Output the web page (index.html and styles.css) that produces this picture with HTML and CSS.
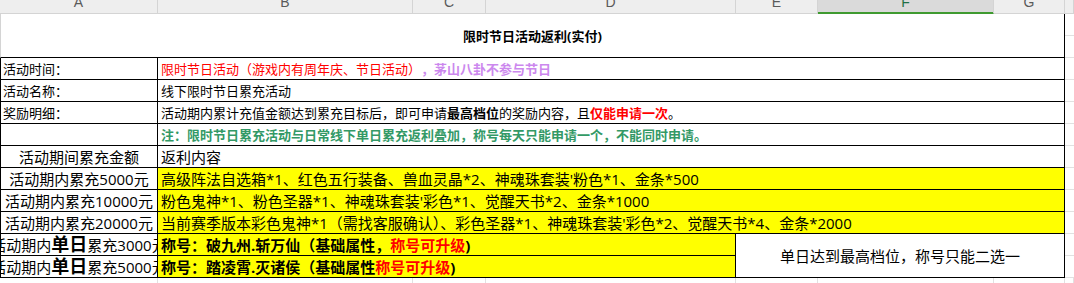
FILE: index.html
```html
<!DOCTYPE html>
<html lang="zh-CN">
<head>
<meta charset="utf-8">
<title>限时节日活动返利(实付)</title>
<link rel="stylesheet" href="styles.css">
</head>
<body>
<div class="colhead">
  <div class="ch">A</div>
  <div class="ch">B</div>
  <div class="ch">C</div>
  <div class="ch">D</div>
  <div class="ch">E</div>
  <div class="ch ch-sel">F</div>
  <div class="ch">G</div>
  <div class="ch"></div>
</div>
<div class="sheet">
  <div class="tbl">
    <div class="c title">限时节日活动返利(实付)</div>

    <div class="c a">活动时间：</div>
    <div class="c b wide"><span class="red">限时节日活动（游戏内有周年庆、节日活动）</span><b class="purple">，茅山八卦不参与节日</b></div>

    <div class="c a">活动名称：</div>
    <div class="c b wide">线下限时节日累充活动</div>

    <div class="c a">奖励明细：</div>
    <div class="c b wide"><span>活动期内累计充值金额达到累充目标后，即可申请<b>最高档位</b>的奖励内容，且<b class="red">仅能申请一次</b>。</span></div>

    <div class="c a"></div>
    <div class="c b wide"><b class="green">注：限时节日累充活动与日常线下单日累充返利叠加，称号每天只能申请一个，不能同时申请。</b></div>

    <div class="c a big center">活动期间累充金额</div>
    <div class="c b wide big">返利内容</div>

    <div class="c a big center">活动期内累充5000元</div>
    <div class="c b wide big yellow">高级阵法自选箱*1、红色五行装备、兽血灵晶*2、神魂珠套装'粉色*1、金条*500</div>

    <div class="c a big center">活动期内累充10000元</div>
    <div class="c b wide big yellow">粉色鬼神*1、粉色圣器*1、神魂珠套装'彩色*1、觉醒天书*2、金条*1000</div>

    <div class="c a big center">活动期内累充20000元</div>
    <div class="c b wide big yellow">当前赛季版本彩色鬼神*1（需找客服确认）、彩色圣器*1、神魂珠套装'彩色*2、觉醒天书*4、金条*2000</div>

    <div class="c a big center r10"><span class="one">活动期内<b class="huge">单日</b>累充3000元</span></div>
    <div class="c b big yellow bold r10 cbd">称号：破九州.斩万仙（基础属性，<span class="red">称号可升级</span>)</div>
    <div class="c note">单日达到最高档位，称号只能二选一</div>

    <div class="c a big center r11"><span class="one">活动期内<b class="huge">单日</b>累充5000元</span></div>
    <div class="c b big yellow bold r11 cbd">称号：踏凌霄.灭诸侯（基础属性<span class="red">称号可升级</span>)</div>
  </div>
  <div class="filler">
    <div class="fc"></div><div class="fc"></div><div class="fc"></div><div class="fc"></div>
    <div class="fc"></div><div class="fc"></div><div class="fc"></div><div class="fc"></div>
  </div>
</div>
</body>
</html>
```

FILE: styles.css
```css
html, body {
  margin: 0;
  padding: 0;
  background: #fff;
}
body {
  font-family: "Open Sans", "Noto Sans CJK SC", sans-serif;
  color: #000;
  overflow: hidden;
}

/* column header strip */
.colhead {
  display: grid;
  grid-template-columns: 158px 255px 73px 250px 82px 176px 71px 1fr;
  height: 14px;
  background: #eeeeee;
}
.ch {
  box-sizing: border-box;
  height: 14px;
  border-right: 1px solid #d4d4d4;
  border-bottom: 1px solid #d4d4d4;
  text-align: center;
  font-family: "Liberation Sans", sans-serif;
  font-size: 14px;
  line-height: 5px;
  color: #5a5a5a;
  overflow: hidden;
}
.ch-sel {
  background: #dadada;
  color: #1e7145;
  border-bottom-color: #3f9a30;
  box-shadow: inset 0 -1px 0 #3f9a30;
}

/* sheet area with faint gridlines */
.sheet {
  background: repeating-linear-gradient(to bottom, transparent 0 21px, #e1e1e1 21px 22px);
}
.tbl {
  display: grid;
  width: 1065px;
  grid-template-columns: 158px 578px 329px;
  grid-template-rows: 44px repeat(10, 22px);
}
.c {
  box-sizing: border-box;
  border-right: 1px solid #000;
  border-bottom: 1px solid #000;
  background: #fff;
  display: flex;
  align-items: center;
  white-space: nowrap;
  overflow: hidden;
  font-size: 13px;
  line-height: 16px;
  padding: 0 3px;
}
.a {
  grid-column: 1;
  border-left: 1px solid #000;
  padding: 0 0 0 2px;
}
.b {
  padding-left: 3px;
}
.wide {
  grid-column: 2 / 4;
}
.title {
  grid-column: 1 / -1;
  justify-content: center;
  font-weight: bold;
  border-left: 1px solid #d4d4d4;
}
.big {
  font-size: 15px;
  line-height: 18px;
}
.center {
  justify-content: center;
  padding: 0;
}
.yellow {
  background: #ffff00;
}
.bold {
  font-weight: bold;
}
.one {
  flex: none;
  line-height: 20px;
}
.huge {
  font-size: 18px;
}
.r10 { grid-row: 10; }
.r11 { grid-row: 11; }
.cbd { grid-column: 2; }
.note {
  grid-column: 3;
  grid-row: 10 / 12;
  justify-content: center;
  font-size: 15px;
}
.red { color: #ff0000; }
.purple { color: #cc88ee; }
.green { color: #339966; }

/* empty cells below the table */
.filler {
  display: grid;
  grid-template-columns: 158px 255px 73px 250px 82px 176px 71px 1fr;
  height: 12px;
}
.fc {
  box-sizing: border-box;
  border-right: 1px solid #e1e1e1;
}
```
